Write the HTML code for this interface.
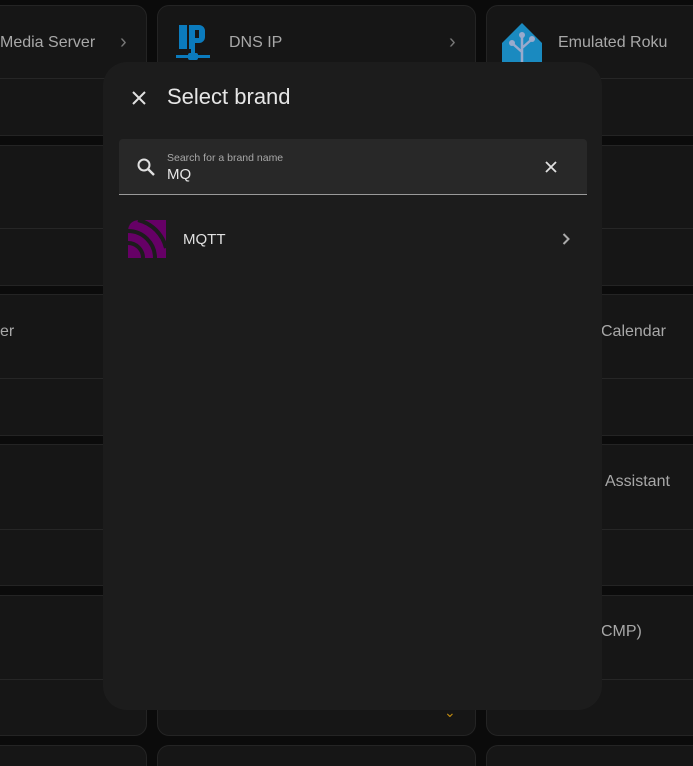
<!DOCTYPE html>
<html><head><meta charset="utf-8"><style>
html,body{margin:0;padding:0;width:693px;height:766px;overflow:hidden;background:#0b0b0b;font-family:"Liberation Sans",sans-serif;position:relative}
.card{position:absolute;background:#161616;border:1px solid #242424;border-radius:12px;box-sizing:border-box;overflow:hidden}
.card .div{position:absolute;left:0;right:0;top:72px;border-top:1px solid #262626}
.t{position:absolute;color:#a8a8a8;font-size:16px}
.dlg{position:absolute;left:103px;top:62px;width:499px;height:648px;background:#1c1c1c;border-radius:24px}
</style></head><body>
<div class="card" style="left:-20px;top:5px;width:167px;height:131px"><div class="div"></div></div>
<div class="card" style="left:157px;top:5px;width:319px;height:131px"><div class="div"></div></div>
<div class="card" style="left:486px;top:5px;width:230px;height:131px"><div class="div"></div></div>
<div class="card" style="left:-20px;top:145px;width:167px;height:141px"><div class="div" style="top:82px"></div></div>
<div class="card" style="left:486px;top:145px;width:230px;height:141px"><div class="div" style="top:82px"></div></div>
<div class="card" style="left:-20px;top:294px;width:167px;height:142px"><div class="div" style="top:83px"></div></div>
<div class="card" style="left:486px;top:294px;width:230px;height:142px"><div class="div" style="top:83px"></div></div>
<div class="card" style="left:-20px;top:444px;width:167px;height:142px"><div class="div" style="top:84px"></div></div>
<div class="card" style="left:486px;top:444px;width:230px;height:142px"><div class="div" style="top:84px"></div></div>
<div class="card" style="left:-20px;top:595px;width:167px;height:141px"><div class="div" style="top:83px"></div></div>
<div class="card" style="left:157px;top:595px;width:319px;height:141px"></div>
<div class="card" style="left:486px;top:595px;width:230px;height:141px"><div class="div" style="top:83px"></div></div>
<div class="card" style="left:-20px;top:745px;width:167px;height:21px;border-bottom:none;border-radius:12px 12px 0 0"></div>
<div class="card" style="left:157px;top:745px;width:319px;height:21px;border-bottom:none;border-radius:12px 12px 0 0"></div>
<div class="card" style="left:486px;top:745px;width:207px;height:21px;border-bottom:none;border-right:none;border-radius:12px 0 0 0"></div>

<div class="t" style="left:0;top:34px">Media Server</div>
<div class="t" style="left:120px;top:31px;font-size:20px;color:#777">›</div>
<svg style="position:absolute;left:176px;top:25px" width="34" height="36" viewBox="0 0 34 36"><rect x="3" y="0" width="8" height="24" fill="#0b7bbd"/><path d="M13 0h10a6 6 0 0 1 6 6v6a6 6 0 0 1-6 6h-4v6h-6z" fill="#0b7bbd"/><rect x="19" y="5" width="4" height="8" fill="#161616"/><rect x="15" y="24" width="4" height="6" fill="#0b7bbd"/><rect x="0" y="30" width="34" height="3" fill="#0b7bbd"/><rect x="12" y="28" width="10" height="7" rx="2" fill="#0b7bbd"/></svg>
<div class="t" style="left:229px;top:34px">DNS IP</div>
<div class="t" style="left:449px;top:31px;font-size:20px;color:#777">›</div>
<svg style="position:absolute;left:501px;top:22px" width="42" height="42" viewBox="0 0 42 42"><path d="M21 1L41 21V42H1V21Z" fill="#1a8ac0"/><path d="M21 14V42M21 30L12 22M21 26L30 18" stroke="#9ac" stroke-width="2.5" fill="none"/><circle cx="21" cy="13" r="3" fill="#9ac"/><circle cx="11" cy="21" r="3" fill="#9ac"/><circle cx="31" cy="17" r="3" fill="#9ac"/></svg>
<div class="t" style="left:558px;top:34px">Emulated Roku</div>
<div class="t" style="left:0;top:323px">er</div>
<div class="t" style="left:601px;top:323px">Calendar</div>
<div class="t" style="left:605px;top:473px">Assistant</div>
<div class="t" style="left:601px;top:623px">CMP)</div>
<div style="position:absolute;left:444px;top:704px;color:#c08a10;font-size:14px">⌄</div>

<div class="dlg">
  <svg style="position:absolute;left:28px;top:28px" width="16" height="16" viewBox="0 0 16 16"><path d="M2 2L14 14M14 2L2 14" stroke="#e0e0e0" stroke-width="2"/></svg>
  <div style="position:absolute;left:64px;top:22px;color:#e6e6e6;font-size:22px">Select brand</div>
  <div style="position:absolute;left:16px;top:77px;width:468px;height:56px;background:#282828;border-radius:4px 4px 0 0;border-bottom:1px solid #9a9a9a;box-sizing:border-box">
    <svg style="position:absolute;left:17px;top:18px" width="20" height="20" viewBox="0 0 20 20"><circle cx="8" cy="8" r="5.5" stroke="#e0e0e0" stroke-width="2" fill="none"/><path d="M12 12L18 18" stroke="#e0e0e0" stroke-width="2.4"/></svg>
    <div style="position:absolute;left:48px;top:13px;color:#a8a8a8;font-size:10.5px">Search for a brand name</div>
    <div style="position:absolute;left:48px;top:27px;color:#e6e6e6;font-size:15px">MQ</div>
    <svg style="position:absolute;left:426px;top:22px" width="12" height="12" viewBox="0 0 12 12"><path d="M1 1L11 11M11 1L1 11" stroke="#e0e0e0" stroke-width="1.8"/></svg>
  </div>
  <svg style="position:absolute;left:25px;top:158px" width="38" height="38" viewBox="0 0 38 38"><rect width="38" height="38" fill="#660066"/><path d="M0 0H12Q0 0 0 12Z" fill="#1c1c1c"/><g fill="none" stroke="#1c1c1c" stroke-width="4"><path d="M0 23A15 15 0 0 1 15 38"/><path d="M0 11A27 27 0 0 1 27 38"/><path d="M10 0A38 38 0 0 1 38 28"/></g></svg>
  <div style="position:absolute;left:80px;top:169px;color:#e0e0e0;font-size:15px">MQTT</div>
  <svg style="position:absolute;left:459px;top:171px" width="8" height="12" viewBox="0 0 8 12"><path d="M1.5 1L6.5 6L1.5 11" stroke="#aaa" stroke-width="2" fill="none"/></svg>
</div>
</body></html>
